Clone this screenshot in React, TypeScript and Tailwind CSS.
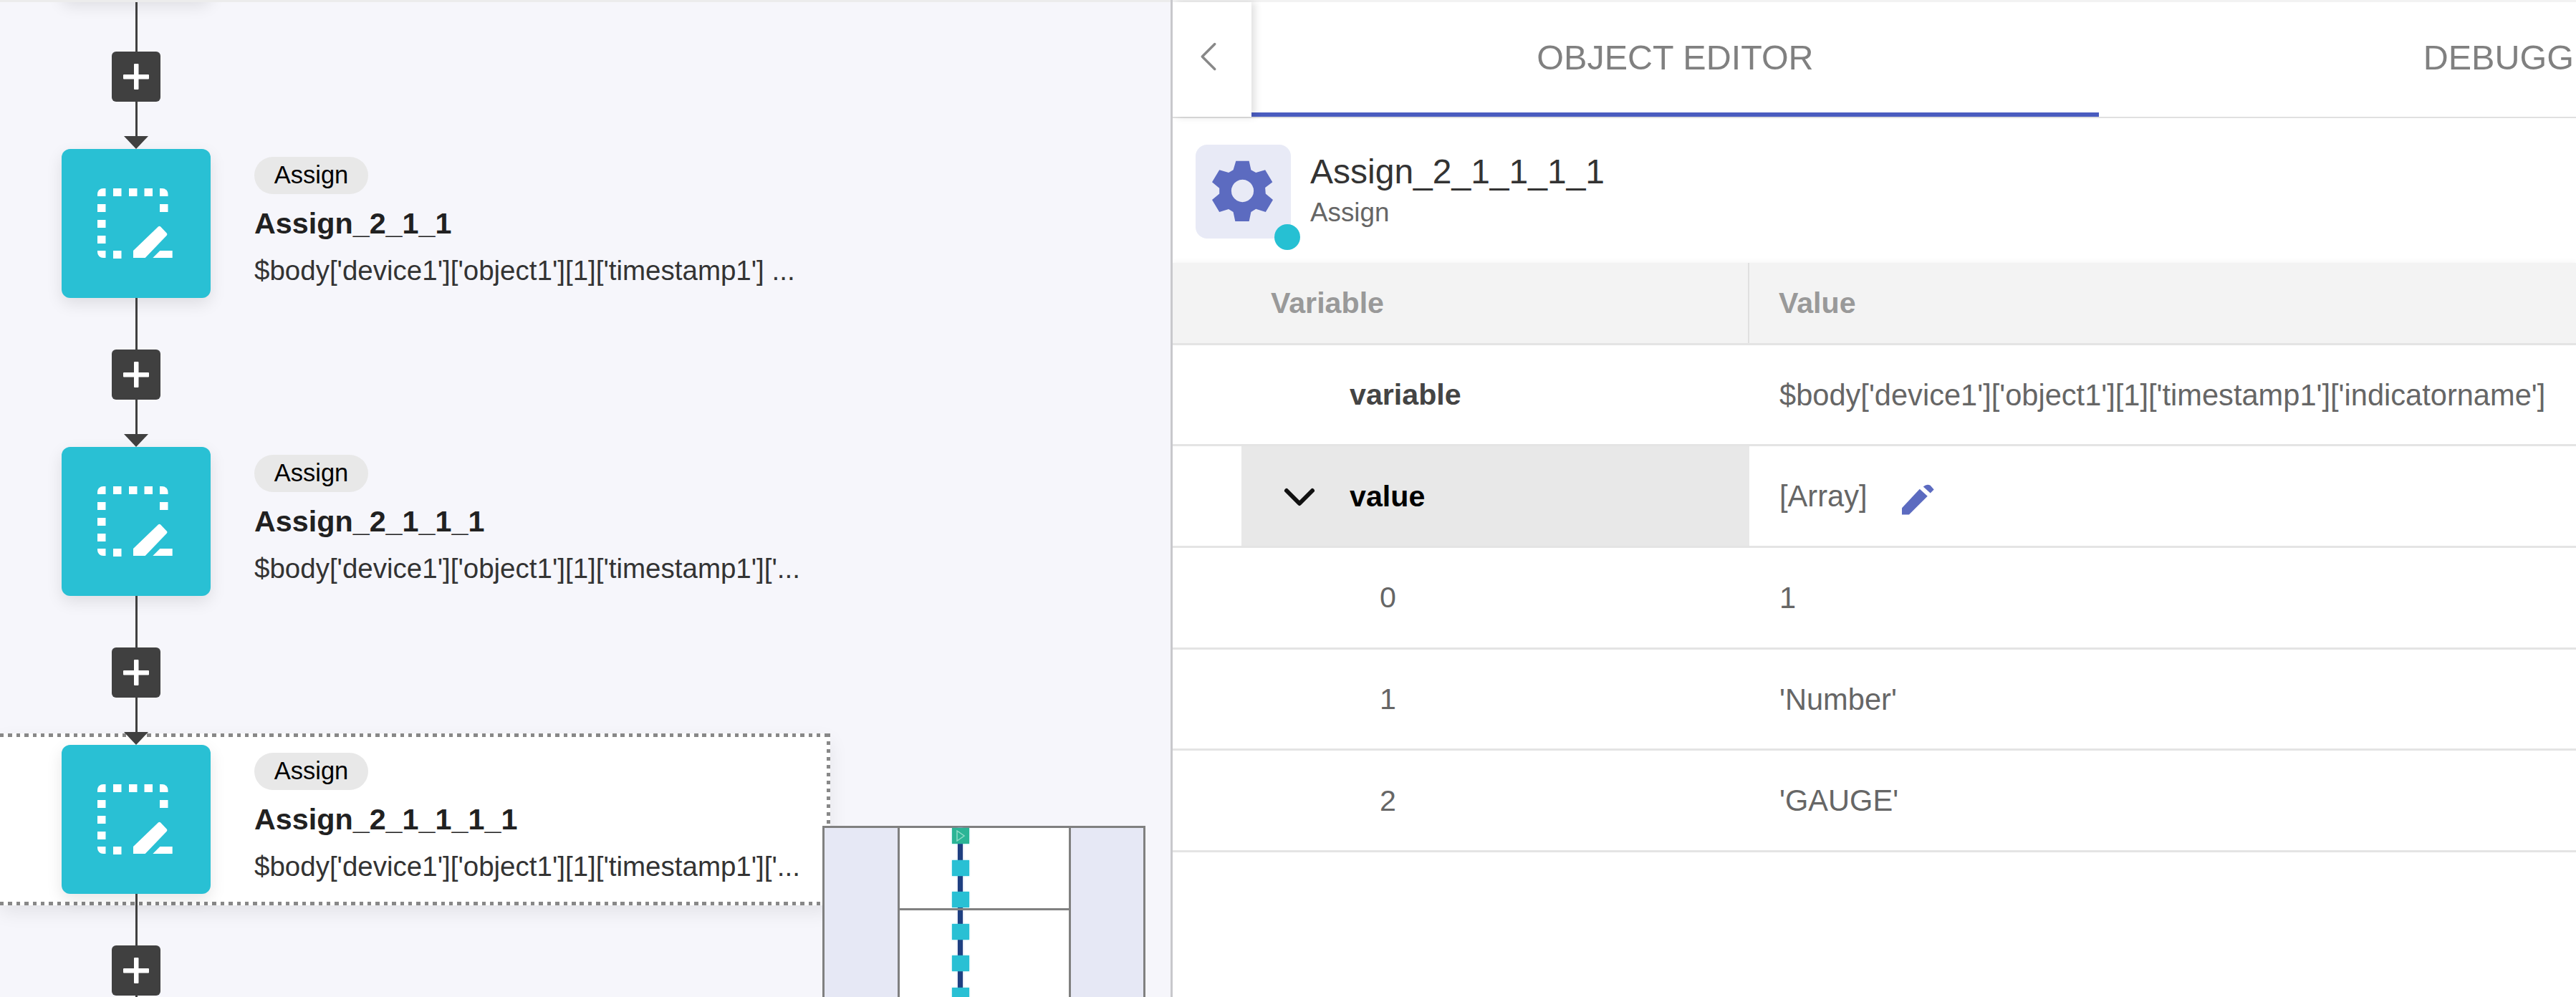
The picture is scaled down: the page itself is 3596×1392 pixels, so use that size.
import { ChevronDown, ChevronLeft } from 'lucide-react';

const FONT = "font-['Liberation_Sans',Arial,sans-serif]";

function AssignIcon() {
  const dots = [
    [72, 55], [94, 55], [115.5, 55],
    [50, 77], [137, 77], [50, 99], [50, 121], [72, 142],
  ];
  return (
    <svg viewBox="0 0 208 208" className="w-[208px] h-[208px]" fill="#fff">
      <path d="M61.5 55v11H50v-3a8 8 0 0 1 8-8z" />
      <path d="M137 55h3.500a8 8 0 0 1 8 8v3H137z" />
      <path d="M50 142h11.500v10H58a8 8 0 0 1-8-8z" />
      {dots.map(([x, y]) => (
        <rect key={`${x}-${y}`} x={x} y={y} width="11.5" height="11" />
      ))}
      <path d="M100 142v10h16.700l30-31.300q1.500-1.700 0-3.200l-8.500-9q-1.700-1.700-3.400 0z" />
      <path d="M137.300 142h17.400v10h-27.400z" />
    </svg>
  );
}

function GearIcon() {
  return (
    <svg viewBox="160 133 250 250" className="w-[85px] h-[85px] -mt-[3px] -ml-[2px]" fill="#5c6bc0">
      <path
        fillRule="evenodd"
        d="M258 135h54l8 37 20 11 38-11 30 50-30 23 2 25 30 25-30 50-40-13-20 13-8 38h-57l-8-38-19-12-38 12-30-50 30-25v-23l-30-25 30-50 38 11 19-11zM285 212a46 46 0 1 0 .01 0z"
      />
    </svg>
  );
}

function AddButton() {
  return (
    <div className="w-[68px] h-[70px] rounded-[6px] bg-[#404040] flex items-center justify-center">
      <svg viewBox="0 0 36 36" className="w-[36px] h-[36px]" fill="#fff">
        <rect x="15" y="0" width="6.500" height="36" rx="1" />
        <rect x="0" y="15" width="36" height="6.500" rx="1" />
      </svg>
    </div>
  );
}

// line, add button, line with arrow head: 208px tall in total
function Connector() {
  return (
    <div className="relative z-20 w-[208px] h-[208px] flex flex-col items-center">
      <div className="w-[3px] h-[72px] bg-[#404040]" />
      <AddButton />
      <div className="w-[3px] h-[48px] bg-[#404040]" />
      <svg viewBox="0 0 34 18" className="w-[34px] h-[18px]" fill="#404040">
        <path d="M0 0h34L17 18z" />
      </svg>
    </div>
  );
}

function Node({ title, desc, selected }: { title: string; desc: string; selected?: boolean }) {
  return (
    <div className={`relative flex ${selected ? 'bg-white shadow-[0_10px_24px_rgba(0,0,0,0.08)] -my-[16px] py-[16px] -ml-[86px] pl-[86px] w-[1159px]' : ''}`}>
      {selected && (
        <>
          <div className="absolute left-0 right-0 top-0 h-[5px] bg-[repeating-linear-gradient(90deg,#888_0_5.500px,transparent_5.500px_11.400px)]" />
          <div className="absolute left-0 right-0 bottom-0 h-[5px] bg-[repeating-linear-gradient(90deg,#888_0_5.500px,transparent_5.500px_11.400px)]" />
          <div className="absolute right-0 top-0 bottom-0 w-[5px] bg-[repeating-linear-gradient(180deg,#888_0_5.500px,transparent_5.500px_11px)]" />
        </>
      )}
      <div className="relative z-10 w-[208px] h-[208px] shrink-0 rounded-[12px] bg-[#29c0d4] shadow-[0_8px_22px_rgba(0,0,0,0.1)]">
        <AssignIcon />
      </div>
      <div className="relative z-10 pl-[61px] text-black">
        <div className="mt-[11px] w-[159px] h-[52px] rounded-full bg-[#e8e8e8] flex items-center justify-center text-[34.500px]">
          Assign
        </div>
        <div className="mt-[18px] h-[46px] leading-[46px] text-[41.300px] font-bold text-[#212121] whitespace-nowrap">{title}</div>
        <div className="mt-[22px] h-[42px] leading-[42px] text-[38.500px] text-[#333] whitespace-nowrap">{desc}</div>
      </div>
    </div>
  );
}

function Minimap() {
  const nodes = [0, 1, 2, 3, 4, 5];
  return (
    <div className="absolute z-30 left-[1148px] top-[1150px] w-[451px] h-[239px] border-[3px] border-b-0 border-[#808080] bg-white flex">
      <div className="w-[105px] shrink-0 bg-[#e6e8f5] border-r-[3px] border-[#808080]" />
      <div className="relative flex-1">
        <div className="absolute left-0 right-0 top-[112px] h-[3px] bg-[#808080] z-10" />
        <div className="absolute left-[81px] top-0 w-[7px] h-full bg-[#1f3f80] shadow-[0_0_3px_#aab6d8]" />
        <div className="absolute left-[73px] top-0 flex flex-col gap-[22.500px]">
          {nodes.map((n) => (
            <div key={n} className={`w-[24px] h-[22px] flex items-center justify-center shadow-[0_0_2px_rgba(41,192,212,0.6)] ${n === 0 ? 'bg-[#2bb596]' : 'bg-[#29c0d4]'}`}>
              {n === 0 && (
                <svg viewBox="0 0 14 16" className="w-[14px] h-[16px]" fill="none" stroke="#8fdcc8" strokeWidth="1.500">
                  <path d="M2 1v14l10-7z" />
                </svg>
              )}
            </div>
          ))}
        </div>
      </div>
      <div className="w-[104px] shrink-0 bg-[#e6e8f5] border-l-[3px] border-[#808080]" />
    </div>
  );
}

function Canvas() {
  return (
    <div className="relative w-[1634px] h-full shrink-0 overflow-hidden bg-[#f6f6fb] border-t-[3px] border-[#ececec]">
      <div className="-mt-[3px] pl-[86px] flex flex-col">
        {/* previous node is scrolled out, only its shadow shows */}
        <div className="w-[208px] h-[208px] -mt-[208px] rounded-[12px] bg-[#29c0d4] shadow-[0_8px_22px_rgba(0,0,0,0.1)]" />
        <Connector />
        <Node title="Assign_2_1_1" desc="$body['device1']['object1'][1]['timestamp1'] ..." />
        <Connector />
        <Node title="Assign_2_1_1_1" desc="$body['device1']['object1'][1]['timestamp1']['..." />
        <Connector />
        <Node selected title="Assign_2_1_1_1_1" desc="$body['device1']['object1'][1]['timestamp1']['..." />
        <Connector />
      </div>
      <Minimap />
    </div>
  );
}

function Row({
  name,
  value,
  bold,
  active,
  center,
  edit,
}: {
  name: string;
  value: string;
  bold?: boolean;
  active?: boolean;
  center?: boolean;
  edit?: boolean;
}) {
  return (
    <div className="flex h-[141.700px] border-b-[3px] border-[#e4e4e4] text-[#666]">
      <div className={`ml-[96px] w-[709px] shrink-0 flex items-center pt-[2px] text-[41.200px] ${active ? 'bg-[#e8e8e8]' : ''}`}>
        {active && <ChevronDown size={72} strokeWidth={2} color="#111" className="ml-[45px] shrink-0" />}
        <span className={active ? 'ml-[34px] font-bold text-black' : bold ? 'ml-[151px] font-bold text-[#444]' : center ? 'ml-[193px]' : ''}>{name}</span>
      </div>
      <div className="pl-[42px] pt-[2px] flex items-center whitespace-nowrap text-[41.600px]">
        {value}
        {edit && (
          <svg viewBox="70 72 136 132" className="ml-[48px] mt-[6px] w-[45px] h-[44px]" fill="#5c6bc0">
            <path d="M70 203v-28l75-80 33 30-78 78z" />
            <path d="M160 85q15-13 30-5l15 17-15 15z" />
          </svg>
        )}
      </div>
    </div>
  );
}

function Panel() {
  return (
    <div className="flex-1 min-w-0 h-full overflow-hidden bg-white border-l-[3px] border-[#c8c8cc]">
      <div className="flex h-[165px] border-b-[2px] border-[#e0e0e0] border-t-[3px] border-t-[#f2f2f2]">
        <div className="relative z-10 w-[110px] shrink-0 bg-white flex items-center justify-center shadow-[5px_0_10px_rgba(0,0,0,0.12)]">
          <ChevronLeft size={70} strokeWidth={1.200} color="#888" className="-ml-[10px] -mt-[8px]" />
        </div>
        <div className="w-[1183px] shrink-0 border-b-[6px] border-[#4a5cbf] flex items-center justify-center text-[48.500px] text-[#808080]">
          OBJECT EDITOR
        </div>
        <div className="w-[1183px] shrink-0 flex items-center justify-center text-[48.500px] text-[#808080] pb-[6px]">DEBUGGER</div>
      </div>
      <div className="flex h-[202px] pl-[32px] pt-[37px]">
        <div className="relative w-[133px] h-[131px] rounded-[16px] bg-[#e8eaf6] flex items-center justify-center">
          <GearIcon />
          <div className="absolute left-[110px] top-[111px] w-[36px] h-[36px] rounded-full bg-[#26c0d3]" />
        </div>
        <div className="ml-[27px]">
          <div className="text-[48px] leading-[56px] mt-[10px] text-[#333]">Assign_2_1_1_1_1</div>
          <div className="text-[36.800px] leading-[44px] mt-[7px] text-[#666]">Assign</div>
        </div>
      </div>
      <div className="flex h-[114.500px] bg-[#f3f3f3] border-b-[3px] border-[#e4e4e4] text-[41.200px] font-bold text-[#999] shadow-[0_-3px_6px_rgba(0,0,0,0.03)]">
        <div className="w-[805px] shrink-0 pl-[137px] pt-[2px] flex items-center border-r-[2px] border-[#e0e0e0]">Variable</div>
        <div className="pl-[41px] pt-[2px] flex items-center">Value</div>
      </div>
      <Row bold name="variable" value="$body['device1']['object1'][1]['timestamp1']['indicatorname']" />
      <Row bold active edit name="value" value="[Array]" />
      <Row center name="0" value="1" />
      <Row center name="1" value="'Number'" />
      <Row center name="2" value="'GAUGE'" />
    </div>
  );
}

export default function App() {
  return (
    <div className={`flex w-[3596px] h-[1392px] overflow-hidden ${FONT}`}>
      <Canvas />
      <Panel />
    </div>
  );
}
